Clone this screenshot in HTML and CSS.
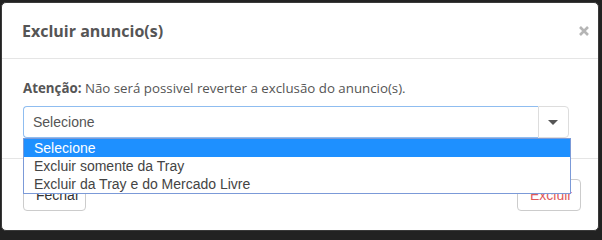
FILE: index.html
```html
<!DOCTYPE html>
<html lang="pt-BR">
<head>
<meta charset="utf-8">
<title>Excluir anuncio(s)</title>
<link rel="stylesheet" href="styles.css">
</head>
<body>
<div class="modal">
  <div class="modal-header">
    <h4 class="modal-title">Excluir anuncio(s)</h4>
    <span class="close" aria-label="Fechar">
      <svg width="10" height="10" viewBox="0 0 10 10"><path d="M1 1 L9 9 M9 1 L1 9" stroke="#b5b5b5" stroke-width="2.6" stroke-linecap="butt"/></svg>
    </span>
  </div>
  <div class="modal-body">
    <p class="warning"><strong>Atenção:</strong> Não será possivel reverter a exclusão do anuncio(s).</p>
    <div class="select-wrap">
      <div class="select-group">
        <div class="select-field">Selecione</div>
        <div class="select-addon"><span class="caret"></span></div>
      </div>
      <ul class="dropdown">
        <li class="active">Selecione</li>
        <li>Excluir somente da Tray</li>
        <li>Excluir da Tray e do Mercado Livre</li>
      </ul>
    </div>
  </div>
  <div class="modal-footer">
    <button class="btn">Fechar</button>
    <button class="btn btn-danger">Excluir</button>
  </div>
</div>
</body>
</html>
```

FILE: styles.css
```css
* { box-sizing: border-box; }
html, body { margin: 0; padding: 0; }
body {
  background: #222;
  width: 602px;
  height: 233px;
  overflow: hidden;
  padding: 2px 3px 2px 1px;
  font-family: "Open Sans", "Liberation Sans", sans-serif;
}
.modal {
  background: #fff;
  border: 1px solid #3a3a3a;
  border-radius: 5px;
  height: 229px;
  display: flex;
  flex-direction: column;
}
.modal-header {
  height: 56px;
  padding: 0 9px 0 20px;
  border-bottom: 1px solid #e5e5e5;
  display: flex;
  align-items: center;
  justify-content: space-between;
}
.modal-title {
  margin: 0;
  font-size: 16px;
  font-weight: 700;
  color: #555;
  line-height: 24px;
}
.close {
  display: flex;
  width: 10px;
  height: 10px;
  margin-top: 1px;
}
.modal-body {
  padding: 20px 29px 20px 21px;
  height: 100px;
  border-bottom: 1px solid #e5e5e5;
}
.warning {
  margin: 0 0 9px 0;
  font-size: 13.3px;
  line-height: 18px;
  color: #555;
}
.warning strong { font-weight: 700; }
.select-wrap { position: relative; }
.select-group {
  display: flex;
  height: 32px;
}
.select-field {
  flex: 1;
  border: 1px solid #8fbdf0;
  border-right: none;
  border-radius: 4px 0 0 4px;
  font-family: "Liberation Sans", Arial, sans-serif;
  font-size: 14px;
  color: #555;
  line-height: 30px;
  padding-left: 9px;
}
.select-addon {
  width: 31px;
  border: 1px solid #ddd;
  border-radius: 0 4px 4px 0;
  display: flex;
  align-items: center;
  justify-content: center;
}
.caret {
  width: 0;
  height: 0;
  border-left: 5px solid transparent;
  border-right: 5px solid transparent;
  border-top: 5px solid #555;
  margin-top: 1px;
  margin-left: -2px;
}
.dropdown {
  position: absolute;
  left: 0;
  top: 32px;
  width: 548px;
  margin: 0;
  padding: 0;
  list-style: none;
  background: #fff;
  border: 1px solid #7b9ad8;
  font-family: "Liberation Sans", Arial, sans-serif;
  font-size: 14px;
  color: #444;
  z-index: 5;
}
.dropdown li {
  height: 18px;
  line-height: 18px;
  padding-left: 10px;
}
.dropdown li.active {
  background: #1e90ff;
  color: #fff;
}
.modal-footer {
  flex: 1;
  padding: 20px 17px 0 21px;
  display: flex;
  justify-content: space-between;
  align-items: flex-start;
}
.btn {
  height: 32px;
  background: #fff;
  border: 1px solid #ccc;
  border-radius: 4px;
  font-family: "Liberation Sans", Arial, sans-serif;
  font-size: 14px;
  color: #333;
  padding: 0 12px;
}
.btn-danger {
  color: #e05a5a;
  width: 64px;
}
.btn:first-child { width: 63px; }
```
